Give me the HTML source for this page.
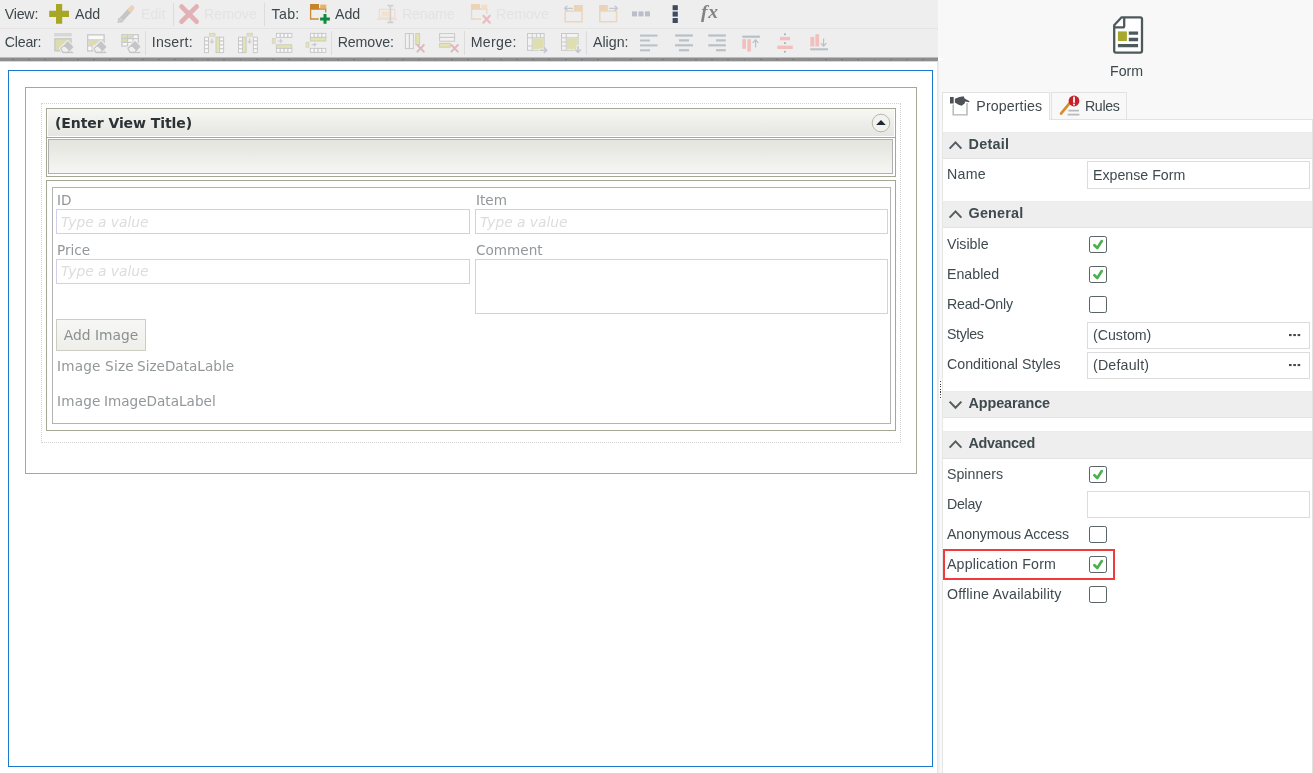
<!DOCTYPE html>
<html lang="en">
<head>
<meta charset="utf-8">
<title>Expense Form - Designer</title>
<style>
html,body{margin:0;padding:0;}
body{width:1313px;height:773px;overflow:hidden;position:relative;background:#fff;font-family:"Liberation Sans",sans-serif;font-size:14px;color:#3f4a4f;}
#wrap{position:absolute;left:0;top:0;width:1313px;height:773px;will-change:transform;}
/* toolbar */
#toolbar{position:absolute;left:0;top:0;width:938px;height:58px;background:#eeeeee;}
#toolbar .row{position:absolute;left:0;width:937px;height:28px;}
#toolbar .sep-h{position:absolute;left:0;top:28px;width:938px;height:1px;background:#e4e4e4;}
#tbshadow{position:absolute;left:0;top:57.3px;width:938px;height:5px;background:linear-gradient(#d5d5d5,#8e8e8e 28%,#8e8e8e 72%,#ffffff);}
#tbticks{position:absolute;left:0;top:58.6px;width:938px;height:1.2px;background:repeating-linear-gradient(90deg,transparent 0,transparent 11.9px,#787878 11.9px,#787878 13.7px,transparent 13.7px,transparent 16.26px);}
.tl{position:absolute;font-size:14.2px;line-height:20px;color:#3d474c;white-space:nowrap;}
.tl.dis{color:#e3e3e3;}
.vsep{position:absolute;width:1px;background:#dcdcdc;}
.ico{position:absolute;}
/* splitter */
#split{position:absolute;left:937px;top:61px;width:5px;height:712px;background:linear-gradient(90deg,#e4e4e4,#f2f2f2 45%,#f8f8f8 55%,#f8f8f8);}
#split0{position:absolute;left:938px;top:0;width:4px;height:58px;background:#f8f8f8;}
#grip{position:absolute;left:939.8px;top:381px;width:1.5px;height:17px;background:repeating-linear-gradient(#3a3a3a 0,#3a3a3a 1.3px,#fff 1.3px,#fff 2.6px);box-shadow:0 0 0 1px #fff;}
/* right panel */
#panel{position:absolute;left:942px;top:0;width:371px;height:773px;background:#f8f8f8;}
#propbody{position:absolute;left:0;top:119px;width:371px;height:654px;background:#fff;border-top:1px solid #e2e2e2;border-left:1px solid #e6e6e6;box-sizing:border-box;}
.tab{position:absolute;top:92px;height:27px;box-sizing:border-box;border:1px solid #e2e2e2;border-bottom:none;background:#f8f8f8;font-size:14.2px;line-height:26px;color:#3f4a4f;}
.tab.active{background:#fff;height:28px;z-index:2;}
.sect{position:absolute;left:1px;width:371px;height:27.2px;background:#eeeeee;border-top:1px solid #ebebeb;border-bottom:1px solid #e3e3e3;box-sizing:border-box;}
.sect span{position:absolute;left:25.5px;top:0;line-height:23.4px;font-size:14.4px;font-weight:bold;color:#3f4a4f;letter-spacing:-0.2px;}
.sect svg{position:absolute;left:4.5px;top:6px;}
.plabel{position:absolute;left:5px;font-size:14.2px;line-height:20px;color:#3f4a4f;white-space:nowrap;}
.pinput{position:absolute;left:145px;width:223px;height:27px;box-sizing:border-box;border:1px solid #dcdcdc;background:#fff;font-size:14.2px;line-height:25px;padding-left:5px;color:#3f4a4f;}
.pinput .dots{position:absolute;left:201.2px;top:11.4px;}
.cb{position:absolute;left:147.2px;width:17.8px;height:17.6px;box-sizing:border-box;border:1.7px solid #5a6366;border-radius:2.2px;background:#fff;}
.cb svg{position:absolute;left:-1.6px;top:-0.9px;}
#prb{position:absolute;left:370px;top:119px;width:1px;height:654px;background:#e2e2e2;}
#redbox{position:absolute;left:1px;top:549px;width:172px;height:31px;box-sizing:border-box;border:2px solid #ef3b3b;}
/* canvas */
#canvas{position:absolute;left:8px;top:70px;width:925px;height:697px;box-sizing:border-box;border:1px solid #1b79cd;border-width:1.2px 1.2px 1.4px 1px;background:#fff;}
#formbox{position:absolute;left:25px;top:87px;width:892px;height:387px;box-sizing:border-box;border:1px solid #a7a796;background:#fff;}
#dotted{position:absolute;left:41px;top:103px;width:860px;height:340px;box-sizing:border-box;border:1px dotted #d2d2d2;}
.vtxt{font-family:"DejaVu Sans","Liberation Sans",sans-serif;}
#titlebox{position:absolute;left:46px;top:108px;width:850px;height:69px;box-sizing:border-box;border:1px solid #a7a796;background:#fff;}
#titlebar{position:absolute;left:1px;top:0;width:846px;height:27px;background:linear-gradient(#f7f7f5,#ecece8 60%,#e6e6e1);}
#titlebar span{position:absolute;left:7px;top:4px;font-family:"DejaVu Sans","Liberation Sans",sans-serif;font-weight:bold;font-size:14.05px;line-height:20px;color:#2b3236;letter-spacing:-0.1px;}
#titlediv{position:absolute;left:0;top:28px;width:848px;height:1px;background:#a7a796;}
#toolbarbox{position:absolute;left:1px;top:30px;width:845px;height:35px;box-sizing:border-box;border:1px solid #b0b0b1;background:linear-gradient(#e4e4df,#ecece8 50%,#f6f6f4);}
#bodybox{position:absolute;left:46px;top:180px;width:850px;height:251px;box-sizing:border-box;border:1px solid #a7a796;background:#fff;}
#bodyinner{position:absolute;left:5px;top:6px;width:839px;height:237.4px;box-sizing:border-box;border:1px solid #b3b3b1;background:#fff;}
.vl{position:absolute;font-family:"DejaVu Sans","Liberation Sans",sans-serif;font-size:13.6px;line-height:18px;color:#92979a;white-space:nowrap;}
.vin{position:absolute;box-sizing:border-box;border:1px solid #cfcff0;background:#fff;font-family:"DejaVu Sans","Liberation Sans",sans-serif;font-style:italic;font-size:13.8px;line-height:22px;color:#dcdddd;padding-left:4px;white-space:nowrap;}
#addimg{position:absolute;left:56px;top:319px;width:90px;height:32px;box-sizing:border-box;border:1px solid #cdcdc1;background:linear-gradient(#f7f7f5,#eeeeea);font-family:"DejaVu Sans","Liberation Sans",sans-serif;font-size:13.8px;line-height:30px;color:#8a8f92;text-align:center;}
</style>
</head>
<body>
<div id="wrap">

<!-- ===== TOOLBAR ===== -->
<div id="toolbar">
  <div class="sep-h"></div>
  <!-- row 1 -->
  <span class="tl" style="left:4.7px;top:4px;letter-spacing:-0.20px;">View:</span>
  <span class="tl" style="left:75px;top:4px;">Add</span>
  <span class="tl dis" style="left:141px;top:4px;">Edit</span>
  <div class="vsep" style="left:173px;top:3px;height:23px;"></div>
  <span class="tl dis" style="left:204px;top:4px;">Remove</span>
  <div class="vsep" style="left:264px;top:3px;height:23px;"></div>
  <span class="tl" style="left:271.6px;top:4px;letter-spacing:0.30px;">Tab:</span>
  <span class="tl" style="left:335px;top:4px;">Add</span>
  <span class="tl dis" style="left:402.0px;top:4px;letter-spacing:-0.20px;">Rename</span>
  <span class="tl dis" style="left:496px;top:4px;">Remove</span>
  <!-- row 2 -->
  <span class="tl" style="left:4.7px;top:32px;letter-spacing:-0.20px;">Clear:</span>
  <div class="vsep" style="left:145px;top:31px;height:24px;"></div>
  <span class="tl" style="left:151.7px;top:32px;letter-spacing:0.25px;">Insert:</span>
  <div class="vsep" style="left:331px;top:31px;height:24px;"></div>
  <span class="tl" style="left:337.7px;top:32px;letter-spacing:-0.10px;">Remove:</span>
  <div class="vsep" style="left:464px;top:31px;height:24px;"></div>
  <span class="tl" style="left:470.7px;top:32px;letter-spacing:0.30px;">Merge:</span>
  <div class="vsep" style="left:586px;top:31px;height:24px;"></div>
  <span class="tl" style="left:593px;top:32px;">Align:</span>
  <!--ICONS-START-->
<svg class="ico" style="left:0;top:0;" width="937" height="58" viewBox="0 0 937 58">
<path d="M56 4 H62.2 V10.8 H69 V17 H62.2 V23.8 H56 V17 H49.2 V10.8 H56 Z" fill="#a7a625"/>
<path d="M121.4 19.4 L130.2 9.8" fill="none" stroke="#c5c5c5" stroke-width="4.8"/>
<path d="M117.4 23 L118.6 17.6 L123.8 22 Z" fill="#c5c5c5"/>
<path d="M130.2 9.8 L131.9 7.9" fill="none" stroke="#e9d2b9" stroke-width="4.8" stroke-linecap="round"/>
<path d="M119 21.4 L120 20.4" fill="none" stroke="#f2f2f2" stroke-width="0.9"/>
<path d="M181.6 6.6 L196.6 21.6 M196.6 6.6 L181.6 21.6" fill="none" stroke="#e2b1b5" stroke-width="4.8" stroke-linecap="round"/>
<path d="M310.6 8.6 V19 H320 M310.6 9 H325.7 V15" fill="none" stroke="#c88a37" stroke-width="1.3"/>
<rect x="310.00" y="4.00" width="9.00" height="5.20" fill="#c5832c"/>
<rect x="320.20" y="4.60" width="6.10" height="3.70" fill="#e9b25c"/>
<path d="M325 12.6 V23.8 M318.7 18.9 H329.9" fill="none" stroke="#eeeeee" stroke-width="5.4"/>
<path d="M325 14 V23.8 M320.1 18.9 H329.9" fill="none" stroke="#0b8a3c" stroke-width="3"/>
<rect x="379.40" y="9.40" width="15.40" height="8.60" fill="none" stroke="#f0dcc5" stroke-width="1.2"/>
<rect x="381.60" y="11.40" width="7.40" height="5.00" fill="#f3e1cc"/>
<path d="M377 19.2 H397" fill="none" stroke="#f0dcc5" stroke-width="1.2"/>
<path d="M387.4 5.6 H393.4 M390.4 5.6 V22.4 M387.4 22.4 H393.4" fill="none" stroke="#cfcfcf" stroke-width="1.6"/>
<path d="M471.6 8.6 V19 H481 M471.6 9 H486.7 V14" fill="none" stroke="#ecd6bc" stroke-width="1.3"/>
<rect x="471.00" y="4.00" width="9.00" height="5.20" fill="#ebd3b6"/>
<rect x="481.20" y="4.60" width="6.10" height="3.70" fill="#f3e0c4"/>
<path d="M483.4 15.8 L489.8 22.8 M489.8 15.8 L483.4 22.8" fill="none" stroke="#e8bcc0" stroke-width="2.1" stroke-linecap="round"/>
<path d="M565.2 11 V21.8 H582 V11 H565.2" fill="none" stroke="#ecd6bc" stroke-width="1.5"/>
<rect x="574.00" y="5.00" width="8.80" height="6.00" fill="#ebd3b6"/>
<path d="M564.6 8.3 H573 M567.4 5.8 L564.6 8.3 L567.4 10.8" fill="none" stroke="#c3c7d4" stroke-width="1.3"/>
<path d="M599.8 11 V21.8 H616.6 V11 H599.8" fill="none" stroke="#ecd6bc" stroke-width="1.5"/>
<rect x="599.00" y="5.00" width="8.80" height="6.00" fill="#ebd3b6"/>
<path d="M609 8.3 H617.4 M614.6 5.8 L617.4 8.3 L614.6 10.8" fill="none" stroke="#c3c7d4" stroke-width="1.3"/>
<rect x="632.00" y="11.40" width="5.00" height="5.00" fill="#babec8"/>
<rect x="638.50" y="11.40" width="5.00" height="5.00" fill="#babec8"/>
<rect x="645.00" y="11.40" width="5.00" height="5.00" fill="#babec8"/>
<rect x="672.60" y="5.20" width="5.20" height="5.00" fill="#3e4a60"/>
<rect x="672.60" y="11.60" width="5.20" height="5.00" fill="#3e4a60"/>
<rect x="672.60" y="18.00" width="5.20" height="5.00" fill="#3e4a60"/>
<text x="700.9" y="18.1" font-family="Liberation Serif,serif" font-style="italic" font-weight="700" font-size="19.6" fill="#838383" letter-spacing="0.9">fx</text>
<rect x="54.20" y="33.00" width="17.50" height="3.40" fill="#d6d8d8"/>
<rect x="54.90" y="38.80" width="16.10" height="12.10" fill="#dcdcb0" stroke="#c8c9c9" stroke-width="1.4"/>
<path d="M67.80 41.80 L72.70 46.80 L69.40 50.40 L67.60 52.30 L62.80 52.30 L60.80 48.40 Z" fill="#eeeeee" stroke="#eeeeee" stroke-width="3.2" stroke-linejoin="round"/>
<path d="M67.80 41.80 L72.70 46.80 L69.40 50.40 L64.50 45.40 Z" fill="#c3c5c6" stroke="#c3c5c6" stroke-width="1.2" stroke-linejoin="round"/>
<path d="M64.50 45.40 L69.40 50.40 L67.60 52.30 L62.80 52.30 L60.80 48.40 Z" fill="#f0f0f0" stroke="#c3c5c6" stroke-width="1.2" stroke-linejoin="round"/>
<path d="M62.4 52.5 H73.2" fill="none" stroke="#c3c5c6" stroke-width="1.3"/>
<rect x="87.70" y="34.90" width="16.40" height="16.00" fill="#f1f1f1" stroke="#c8c9c9" stroke-width="1.4"/>
<rect x="88.60" y="35.80" width="14.60" height="3.40" fill="#fafafa"/>
<path d="M87.7 40 H104.1" fill="none" stroke="#c8c9c9" stroke-width="1.3"/>
<rect x="88.50" y="40.70" width="14.80" height="4.50" fill="#dcdcb0"/>
<path d="M87.7 45.9 H92 V51" fill="none" stroke="#c8c9c9" stroke-width="1.3"/>
<rect x="88.50" y="46.60" width="2.80" height="3.60" fill="#fafafa"/>
<path d="M100.90 41.80 L105.80 46.80 L102.50 50.40 L100.70 52.30 L95.90 52.30 L93.90 48.40 Z" fill="#eeeeee" stroke="#eeeeee" stroke-width="3.2" stroke-linejoin="round"/>
<path d="M100.90 41.80 L105.80 46.80 L102.50 50.40 L97.60 45.40 Z" fill="#c3c5c6" stroke="#c3c5c6" stroke-width="1.2" stroke-linejoin="round"/>
<path d="M97.60 45.40 L102.50 50.40 L100.70 52.30 L95.90 52.30 L93.90 48.40 Z" fill="#f0f0f0" stroke="#c3c5c6" stroke-width="1.2" stroke-linejoin="round"/>
<path d="M95.5 52.5 H106.3" fill="none" stroke="#c3c5c6" stroke-width="1.3"/>
<rect x="121.90" y="34.80" width="16.40" height="11.20" fill="#f8f8f8" stroke="#c8c9c9" stroke-width="1.3"/>
<rect x="122.60" y="35.50" width="4.60" height="2.90" fill="#dcdcb0"/>
<rect x="128.20" y="35.50" width="4.40" height="2.90" fill="#dcdcb0"/>
<rect x="122.60" y="39.20" width="4.60" height="2.90" fill="#dcdcb0"/>
<path d="M121.9 38.7 H138.3 M121.9 42.4 H138.3 M127.6 34.8 V46 M133 34.8 V46" fill="none" stroke="#c8c9c9" stroke-width="1.2"/>
<path d="M134.90 41.60 L139.80 46.60 L136.50 50.20 L134.70 52.30 L129.90 52.30 L127.90 48.20 Z" fill="#eeeeee" stroke="#eeeeee" stroke-width="3.2" stroke-linejoin="round"/>
<path d="M134.90 41.60 L139.80 46.60 L136.50 50.20 L131.60 45.20 Z" fill="#c3c5c6" stroke="#c3c5c6" stroke-width="1.2" stroke-linejoin="round"/>
<path d="M131.60 45.20 L136.50 50.20 L134.70 52.30 L129.90 52.30 L127.90 48.20 Z" fill="#f0f0f0" stroke="#c3c5c6" stroke-width="1.2" stroke-linejoin="round"/>
<path d="M129.5 52.5 H140.29999999999998" fill="none" stroke="#c3c5c6" stroke-width="1.3"/>
<rect x="204.50" y="37.20" width="4.00" height="3.85" fill="#f8f8f8" stroke="#c9c9c9" stroke-width="1"/>
<rect x="204.50" y="41.05" width="4.00" height="3.85" fill="#f8f8f8" stroke="#c9c9c9" stroke-width="1"/>
<rect x="204.50" y="44.90" width="4.00" height="3.85" fill="#f8f8f8" stroke="#c9c9c9" stroke-width="1"/>
<rect x="204.50" y="48.75" width="4.00" height="3.85" fill="#f8f8f8" stroke="#c9c9c9" stroke-width="1"/>
<rect x="209.60" y="33.20" width="5.40" height="3.00" fill="#e4e4ae" stroke="#c9c9c9" stroke-width="0.6"/>
<path d="M212 38.6 V42.2 M210.2 41.0 L212 43.0 L213.8 41.0" fill="none" stroke="#c9cbd3" stroke-width="1.1"/>
<rect x="216.00" y="37.20" width="3.60" height="15.40" fill="#e4e4ae" stroke="#c9c9c9" stroke-width="1"/>
<rect x="219.60" y="37.20" width="4.00" height="3.85" fill="#f8f8f8" stroke="#c9c9c9" stroke-width="1"/>
<rect x="219.60" y="41.05" width="4.00" height="3.85" fill="#f8f8f8" stroke="#c9c9c9" stroke-width="1"/>
<rect x="219.60" y="44.90" width="4.00" height="3.85" fill="#f8f8f8" stroke="#c9c9c9" stroke-width="1"/>
<rect x="219.60" y="48.75" width="4.00" height="3.85" fill="#f8f8f8" stroke="#c9c9c9" stroke-width="1"/>
<rect x="238.50" y="37.20" width="4.00" height="3.85" fill="#f8f8f8" stroke="#c9c9c9" stroke-width="1"/>
<rect x="238.50" y="41.05" width="4.00" height="3.85" fill="#f8f8f8" stroke="#c9c9c9" stroke-width="1"/>
<rect x="238.50" y="44.90" width="4.00" height="3.85" fill="#f8f8f8" stroke="#c9c9c9" stroke-width="1"/>
<rect x="238.50" y="48.75" width="4.00" height="3.85" fill="#f8f8f8" stroke="#c9c9c9" stroke-width="1"/>
<rect x="242.50" y="37.20" width="3.60" height="15.40" fill="#e4e4ae" stroke="#c9c9c9" stroke-width="1"/>
<rect x="247.00" y="33.20" width="5.60" height="3.00" fill="#e4e4ae" stroke="#c9c9c9" stroke-width="0.6"/>
<path d="M249.6 38.6 V42.2 M247.79999999999998 41.0 L249.6 43.0 L251.4 41.0" fill="none" stroke="#c9cbd3" stroke-width="1.1"/>
<rect x="253.40" y="37.20" width="4.00" height="3.85" fill="#f8f8f8" stroke="#c9c9c9" stroke-width="1"/>
<rect x="253.40" y="41.05" width="4.00" height="3.85" fill="#f8f8f8" stroke="#c9c9c9" stroke-width="1"/>
<rect x="253.40" y="44.90" width="4.00" height="3.85" fill="#f8f8f8" stroke="#c9c9c9" stroke-width="1"/>
<rect x="253.40" y="48.75" width="4.00" height="3.85" fill="#f8f8f8" stroke="#c9c9c9" stroke-width="1"/>
<rect x="276.40" y="33.40" width="3.85" height="4.00" fill="#f8f8f8" stroke="#c9c9c9" stroke-width="1"/>
<rect x="280.25" y="33.40" width="3.85" height="4.00" fill="#f8f8f8" stroke="#c9c9c9" stroke-width="1"/>
<rect x="284.10" y="33.40" width="3.85" height="4.00" fill="#f8f8f8" stroke="#c9c9c9" stroke-width="1"/>
<rect x="287.95" y="33.40" width="3.85" height="4.00" fill="#f8f8f8" stroke="#c9c9c9" stroke-width="1"/>
<rect x="272.20" y="38.60" width="3.00" height="4.80" fill="#e4e4ae" stroke="#c9c9c9" stroke-width="0.6"/>
<path d="M277.6 41 H281.20000000000005 M280.0 39.2 L282.0 41 L280.0 42.8" fill="none" stroke="#c9cbd3" stroke-width="1.1"/>
<rect x="276.40" y="44.80" width="15.40" height="3.60" fill="#e4e4ae" stroke="#c9c9c9" stroke-width="1"/>
<rect x="276.40" y="48.40" width="3.85" height="4.00" fill="#f8f8f8" stroke="#c9c9c9" stroke-width="1"/>
<rect x="280.25" y="48.40" width="3.85" height="4.00" fill="#f8f8f8" stroke="#c9c9c9" stroke-width="1"/>
<rect x="284.10" y="48.40" width="3.85" height="4.00" fill="#f8f8f8" stroke="#c9c9c9" stroke-width="1"/>
<rect x="287.95" y="48.40" width="3.85" height="4.00" fill="#f8f8f8" stroke="#c9c9c9" stroke-width="1"/>
<rect x="310.40" y="33.40" width="3.85" height="4.00" fill="#f8f8f8" stroke="#c9c9c9" stroke-width="1"/>
<rect x="314.25" y="33.40" width="3.85" height="4.00" fill="#f8f8f8" stroke="#c9c9c9" stroke-width="1"/>
<rect x="318.10" y="33.40" width="3.85" height="4.00" fill="#f8f8f8" stroke="#c9c9c9" stroke-width="1"/>
<rect x="321.95" y="33.40" width="3.85" height="4.00" fill="#f8f8f8" stroke="#c9c9c9" stroke-width="1"/>
<rect x="310.40" y="37.40" width="15.40" height="3.60" fill="#e4e4ae" stroke="#c9c9c9" stroke-width="1"/>
<rect x="306.00" y="42.20" width="3.00" height="5.00" fill="#e4e4ae" stroke="#c9c9c9" stroke-width="0.6"/>
<path d="M311.6 44.6 H315.20000000000005 M314.0 42.800000000000004 L316.0 44.6 L314.0 46.4" fill="none" stroke="#c9cbd3" stroke-width="1.1"/>
<rect x="310.40" y="48.40" width="3.85" height="4.00" fill="#f8f8f8" stroke="#c9c9c9" stroke-width="1"/>
<rect x="314.25" y="48.40" width="3.85" height="4.00" fill="#f8f8f8" stroke="#c9c9c9" stroke-width="1"/>
<rect x="318.10" y="48.40" width="3.85" height="4.00" fill="#f8f8f8" stroke="#c9c9c9" stroke-width="1"/>
<rect x="321.95" y="48.40" width="3.85" height="4.00" fill="#f8f8f8" stroke="#c9c9c9" stroke-width="1"/>
<rect x="405.40" y="33.60" width="4.00" height="15.00" fill="#f1f1f1" stroke="#c9c9c9" stroke-width="1"/>
<rect x="409.40" y="33.60" width="4.00" height="15.00" fill="#f1f1f1" stroke="#c9c9c9" stroke-width="1"/>
<rect x="415.80" y="33.60" width="3.80" height="11.00" fill="#e4e4ae" stroke="#c9c9c9" stroke-width="0.9"/>
<path d="M417.4 45 L423.8 51.6 M423.8 45 L417.4 51.6" fill="none" stroke="#e5b5b9" stroke-width="2" stroke-linecap="round"/>
<rect x="439.60" y="33.60" width="15.00" height="3.80" fill="#f1f1f1" stroke="#c9c9c9" stroke-width="1"/>
<rect x="439.60" y="37.40" width="15.00" height="3.80" fill="#f1f1f1" stroke="#c9c9c9" stroke-width="1"/>
<rect x="439.60" y="43.40" width="10.60" height="3.80" fill="#e4e4ae" stroke="#c9c9c9" stroke-width="0.9"/>
<path d="M451.4 45 L457.8 51.6 M457.8 45 L451.4 51.6" fill="none" stroke="#e5b5b9" stroke-width="2" stroke-linecap="round"/>
<rect x="527.50" y="33.50" width="16.60" height="16.80" fill="#f3f3f3" stroke="#c9c9c9" stroke-width="1"/>
<path d="M527.5 37.8 H544 M532.2 33.5 V50.3 M536.4 33.5 V37.8 M540.4 33.5 V37.8 M527.5 46 H532.2" fill="none" stroke="#c9c9c9" stroke-width="1"/>
<rect x="532.80" y="38.40" width="10.80" height="10.60" fill="#dedeb0"/>
<path d="M539 50.2 H546.8 M543.8 47.4 L546.8 50.2 L543.8 53" fill="none" stroke="#eeeeee" stroke-width="3.2"/>
<path d="M540 50.2 H546.8 M543.8 47.4 L546.8 50.2 L543.8 53" fill="none" stroke="#c3c5cf" stroke-width="1.5"/>
<rect x="561.50" y="33.50" width="16.60" height="16.80" fill="#f3f3f3" stroke="#c9c9c9" stroke-width="1"/>
<path d="M561.5 37.8 H578 M566.2 33.5 V50.3 M561.5 42 H566.2 M561.5 46 H566.2" fill="none" stroke="#c9c9c9" stroke-width="1"/>
<rect x="566.80" y="38.40" width="10.80" height="10.60" fill="#dedeb0"/>
<path d="M578 45 V52.4 M575.2 49.4 L578 52.4 L580.8 49.4" fill="none" stroke="#eeeeee" stroke-width="3.2"/>
<path d="M578 46 V52.4 M575.2 49.4 L578 52.4 L580.8 49.4" fill="none" stroke="#c3c5cf" stroke-width="1.5"/>
<rect x="640.00" y="34.60" width="17.50" height="2.00" fill="#b7c1c7"/>
<rect x="640.00" y="39.50" width="10.00" height="2.00" fill="#b7c1c7"/>
<rect x="640.00" y="44.40" width="17.50" height="2.00" fill="#b7c1c7"/>
<rect x="640.00" y="49.30" width="10.00" height="2.00" fill="#b7c1c7"/>
<rect x="675.10" y="34.40" width="17.80" height="2.20" fill="#b7c1c7"/>
<rect x="679.00" y="39.30" width="10.00" height="2.20" fill="#b7c1c7"/>
<rect x="675.10" y="44.20" width="17.80" height="2.20" fill="#b7c1c7"/>
<rect x="679.00" y="49.10" width="10.00" height="2.20" fill="#b7c1c7"/>
<rect x="708.30" y="34.40" width="17.50" height="2.20" fill="#b7c1c7"/>
<rect x="716.00" y="39.30" width="9.80" height="2.20" fill="#b7c1c7"/>
<rect x="708.30" y="44.20" width="17.50" height="2.20" fill="#b7c1c7"/>
<rect x="716.00" y="49.10" width="9.80" height="2.20" fill="#b7c1c7"/>
<rect x="742.30" y="35.60" width="17.60" height="2.20" fill="#b7c1c7"/>
<rect x="742.30" y="39.20" width="3.70" height="9.60" fill="#f1c0bd"/>
<rect x="747.40" y="39.20" width="3.50" height="12.40" fill="#f1c0bd"/>
<path d="M755.6 47.6 V40 M752.8 42.8 L755.6 39.8 L758.4 42.8" fill="none" stroke="#b7c1c7" stroke-width="1.2"/>
<rect x="780.00" y="36.90" width="10.00" height="3.40" fill="#f1c0bd"/>
<rect x="777.30" y="45.60" width="15.50" height="3.40" fill="#f1c0bd"/>
<rect x="784.00" y="33.40" width="1.80" height="1.80" fill="#a9b0ba"/>
<rect x="784.00" y="42.20" width="1.80" height="1.80" fill="#a9b0ba"/>
<rect x="784.00" y="50.80" width="1.80" height="1.80" fill="#a9b0ba"/>
<rect x="810.40" y="36.90" width="3.90" height="9.60" fill="#f1c0bd"/>
<rect x="815.40" y="34.20" width="3.70" height="12.30" fill="#f1c0bd"/>
<rect x="810.20" y="48.30" width="17.80" height="2.00" fill="#b7c1c7"/>
<path d="M823.6 38.4 V46 M820.8 43.2 L823.6 46.2 L826.4 43.2" fill="none" stroke="#b7c1c7" stroke-width="1.2"/>
</svg>
<!--ICONS-END-->
</div>
<div id="tbshadow"></div><div id="tbticks"></div>

<!-- ===== CANVAS ===== -->
<div id="canvas"></div>
<div id="formbox"></div>
<div id="dotted"></div>
<div id="titlebox">
  <div id="titlebar"><span>(Enter View Title)</span><svg class="ico" style="left:823.4px;top:3.5px;" width="20" height="20" viewBox="0 0 20 20"><circle cx="10" cy="10" r="8.8" fill="#f2f2ee" stroke="#b9b9ad" stroke-width="1"/><path d="M5.2 12 L10 7 L14.8 12 Z" fill="#1f2933"/></svg></div>
  <div id="titlediv"></div>
  <div id="toolbarbox"></div>
</div>
<div id="bodybox">
  <div id="bodyinner"></div>
</div>
<span class="vl" style="left:57px;top:191px;">ID</span>
<div class="vin" style="left:56px;top:209px;width:413.6px;height:25px;line-height:25px;">Type a value</div>
<span class="vl" style="left:476px;top:191px;">Item</span>
<div class="vin" style="left:475px;top:209px;width:413px;height:25px;line-height:25px;">Type a value</div>
<span class="vl" style="left:57px;top:241px;">Price</span>
<div class="vin" style="left:56px;top:259.3px;width:413.6px;height:24.4px;line-height:23.4px;">Type a value</div>
<span class="vl" style="left:476px;top:241px;">Comment</span>
<div class="vin" style="left:475px;top:259px;width:413px;height:55px;"></div>
<div id="addimg">Add Image</div>
<span class="vl" style="left:57px;top:357px;letter-spacing:0.2px;">Image Size</span>
<span class="vl" style="left:137px;top:357px;">SizeDataLable</span>
<span class="vl" style="left:57px;top:392px;letter-spacing:0.2px;">Image</span>
<span class="vl" style="left:104px;top:392px;">ImageDataLabel</span>

<!-- ===== SPLITTER ===== -->
<div id="split"></div><div id="split0"></div><div id="grip"></div>

<!-- ===== RIGHT PANEL ===== -->
<div id="panel">
  <svg class="ico" style="left:168px;top:13px;" width="36" height="44" viewBox="1110 13 36 44">
<path d="M1121.6 17.3 H1140.2 Q1142 17.3 1142 19.1 V50.8 Q1142 52.6 1140.2 52.6 H1116 Q1114.2 52.6 1114.2 50.8 V25.2 Z" fill="#fff" stroke="#4e595c" stroke-width="2.3" stroke-linejoin="round"/>
<path d="M1124.2 17.6 V26 Q1124.2 27.4 1122.8 27.4 H1114.6" fill="none" stroke="#4e595c" stroke-width="2.3"/>
<rect x="1117.9" y="31.4" width="9" height="9.6" fill="#a6a92e"/>
<path d="M1128.8 33.1 H1138.1 M1128.8 39.5 H1138.1 M1117.9 45.7 H1138.1" stroke="#4e595c" stroke-width="3.3" fill="none"/>
</svg>
  <span class="tl" style="left:168px;top:61px;">Form</span>
  <div class="tab active" style="left:0px;width:108px;"><svg class="ico" style="left:5px;top:2px;" width="24" height="22" viewBox="948 95 24 22"><path d="M953.2 104.6 V114.9 H967 V103" fill="#fff" stroke="#b3b3b3" stroke-width="1.4"/><path d="M950 97.1 H953.7 V103.6 H950 Z M954.9 98.8 L959.4 97 L963.6 96.2 L964.6 98.4 L969.6 101.2 L969 102.2 L965.2 101.6 L964.6 103.4 L961.6 105.8 L958.6 104.8 L954.9 102.4 Z" fill="#4d5157"/></svg><span style="position:absolute;left:33.3px;"><b style="font-weight:inherit;letter-spacing:0.12px">Properties</b></span></div>
  <div class="tab" style="left:109px;width:76px;"><svg class="ico" style="left:7px;top:1px;" width="24" height="23" viewBox="1059 94 24 23"><path d="M1061 113.6 L1070.4 102.2" stroke="#d98a2b" stroke-width="2.6" stroke-linecap="round"/><path d="M1068.4 110.6 H1079 M1067.6 114.6 H1079.4" stroke="#b9b9b9" stroke-width="1.8"/><circle cx="1074" cy="101" r="5.4" fill="#c8202b"/><path d="M1074 97.4 V102" stroke="#fff" stroke-width="1.8" stroke-linecap="round"/><circle cx="1074" cy="104.4" r="1" fill="#fff"/></svg><span style="position:absolute;left:33px;"><b style="font-weight:inherit;letter-spacing:-0.38px">Rules</b></span></div>
  <div id="propbody"></div>
<div class="sect" style="top:131.8px;"><svg width="15" height="13" viewBox="0 0 15 13"><path d="M1.6 9.6 L7.5 3.4 L13.4 9.6" fill="none" stroke="#555c60" stroke-width="2"/></svg><span><b style="font-weight:inherit;letter-spacing:0.24px">Detail</b></span></div>
<span class="plabel" style="top:164px;"><b style="font-weight:inherit;letter-spacing:0.30px">Name</b></span>
<div class="pinput" style="top:161px;height:28px;line-height:27px;">Expense Form</div>
<div class="sect" style="top:201.2px;"><svg width="15" height="13" viewBox="0 0 15 13"><path d="M1.6 9.6 L7.5 3.4 L13.4 9.6" fill="none" stroke="#555c60" stroke-width="2"/></svg><span><b style="font-weight:inherit;letter-spacing:0.20px">General</b></span></div>
<span class="plabel" style="top:234px;">Visible</span>
<div class="cb" style="top:235.7px;"><svg width="18" height="18" viewBox="0 0 18 18"><path d="M5.4 9.2 L8.3 12 L12.8 5.1" fill="none" stroke="#4bb150" stroke-width="2.7" stroke-linecap="round" stroke-linejoin="round"/></svg></div>
<span class="plabel" style="top:264px;">Enabled</span>
<div class="cb" style="top:265.7px;"><svg width="18" height="18" viewBox="0 0 18 18"><path d="M5.4 9.2 L8.3 12 L12.8 5.1" fill="none" stroke="#4bb150" stroke-width="2.7" stroke-linecap="round" stroke-linejoin="round"/></svg></div>
<span class="plabel" style="top:294px;"><b style="font-weight:inherit;letter-spacing:-0.23px">Read-Only</b></span>
<div class="cb" style="top:295.7px;"></div>
<span class="plabel" style="top:324px;"><b style="font-weight:inherit;letter-spacing:-0.34px">Styles</b></span>
<div class="pinput" style="top:321.5px;">(Custom)<svg class="dots" width="12" height="3" viewBox="0 0 12 3"><rect x="0" y="0" width="2.6" height="2.1" fill="#3f4a4f"/><rect x="4.3" y="0" width="2.6" height="2.1" fill="#3f4a4f"/><rect x="8.6" y="0" width="2.6" height="2.1" fill="#3f4a4f"/></svg></div>
<span class="plabel" style="top:354px;">Conditional Styles</span>
<div class="pinput" style="top:351.5px;"><b style="font-weight:inherit;letter-spacing:0.20px">(Default)</b><svg class="dots" width="12" height="3" viewBox="0 0 12 3"><rect x="0" y="0" width="2.6" height="2.1" fill="#3f4a4f"/><rect x="4.3" y="0" width="2.6" height="2.1" fill="#3f4a4f"/><rect x="8.6" y="0" width="2.6" height="2.1" fill="#3f4a4f"/></svg></div>
<div class="sect" style="top:391.2px;"><svg width="15" height="13" viewBox="0 0 15 13"><path d="M1.6 3.6 L7.5 9.8 L13.4 3.6" fill="none" stroke="#555c60" stroke-width="2"/></svg><span><b style="font-weight:inherit;letter-spacing:-0.09px">Appearance</b></span></div>
<div class="sect" style="top:431.4px;"><svg width="15" height="13" viewBox="0 0 15 13"><path d="M1.6 9.6 L7.5 3.4 L13.4 9.6" fill="none" stroke="#555c60" stroke-width="2"/></svg><span><b style="font-weight:inherit;letter-spacing:-0.29px">Advanced</b></span></div>
<span class="plabel" style="top:464px;">Spinners</span>
<div class="cb" style="top:465.7px;"><svg width="18" height="18" viewBox="0 0 18 18"><path d="M5.4 9.2 L8.3 12 L12.8 5.1" fill="none" stroke="#4bb150" stroke-width="2.7" stroke-linecap="round" stroke-linejoin="round"/></svg></div>
<span class="plabel" style="top:494px;"><b style="font-weight:inherit;letter-spacing:-0.30px">Delay</b></span>
<div class="pinput" style="top:491.2px;"></div>
<span class="plabel" style="top:524px;"><b style="font-weight:inherit;letter-spacing:-0.11px">Anonymous Access</b></span>
<div class="cb" style="top:525.7px;"></div>
<span class="plabel" style="top:554px;"><b style="font-weight:inherit;letter-spacing:0.16px">Application Form</b></span>
<div class="cb" style="top:555.7px;"><svg width="18" height="18" viewBox="0 0 18 18"><path d="M5.4 9.2 L8.3 12 L12.8 5.1" fill="none" stroke="#4bb150" stroke-width="2.7" stroke-linecap="round" stroke-linejoin="round"/></svg></div>
<span class="plabel" style="top:584px;"><b style="font-weight:inherit;letter-spacing:0.19px">Offline Availability</b></span>
<div class="cb" style="top:585.7px;"></div>
<div id="redbox"></div>
<div id="prb"></div>

</div>

</div>
</body>
</html>
